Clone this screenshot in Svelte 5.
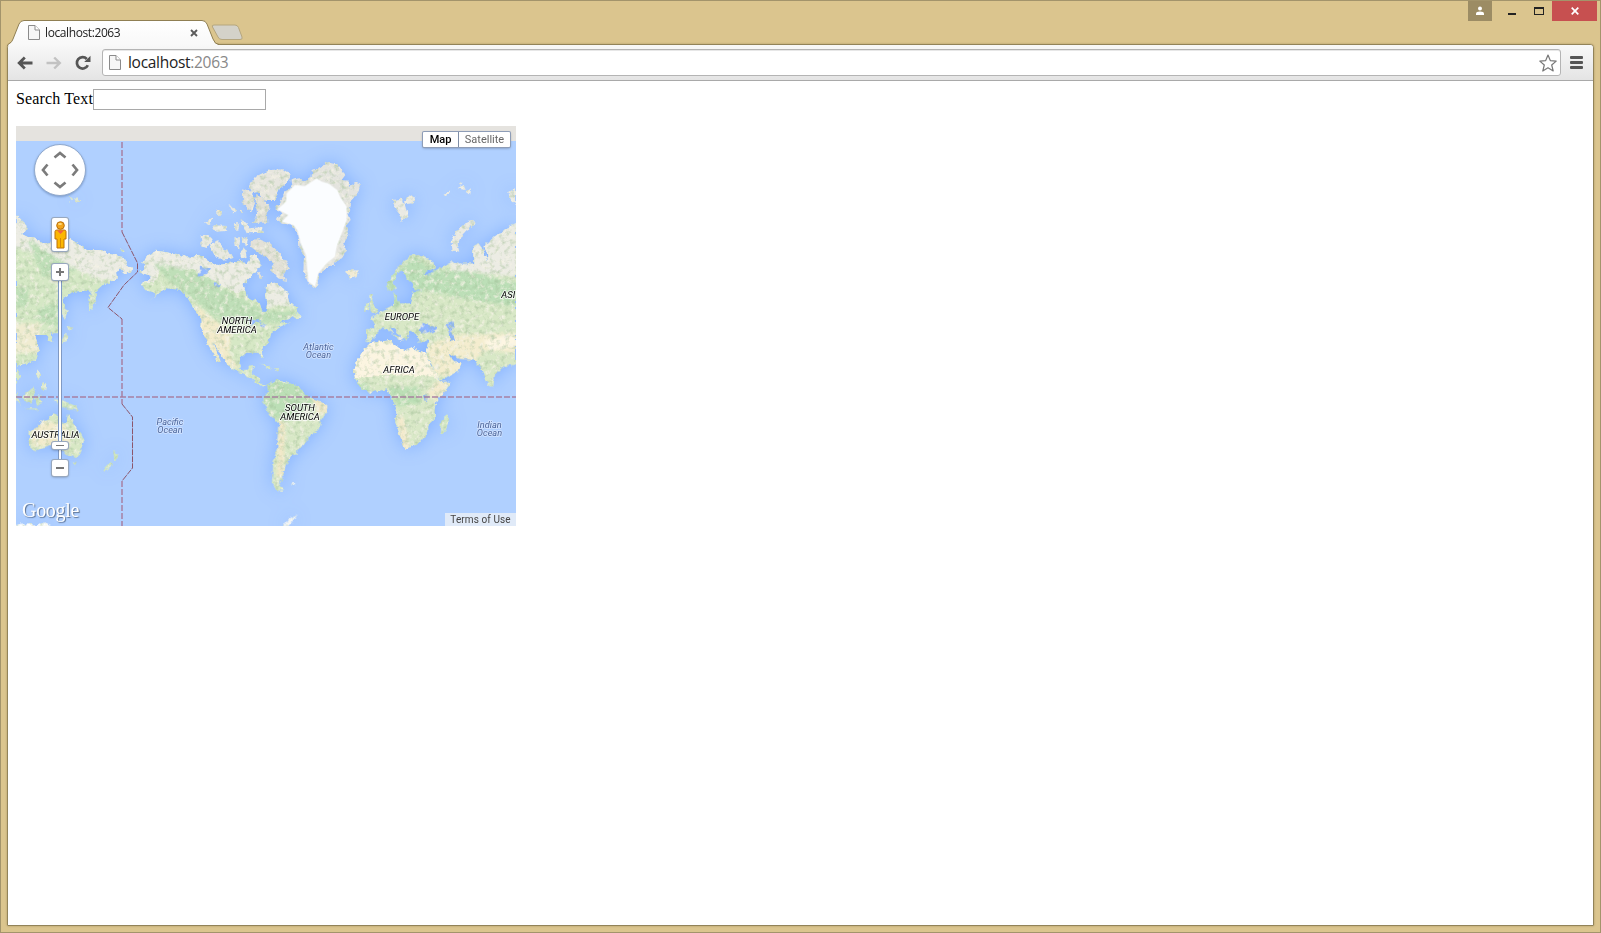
<script>
  let query = $state('');
  // Latin labels painted on the map canvas
  const labels = [
    { x: 237, y: 324, lines: ['NORTH', 'AMERICA'] },
    { x: 300, y: 411, lines: ['SOUTH', 'AMERICA'] },
    { x: 402, y: 320, lines: ['EUROPE'] },
    { x: 399, y: 373, lines: ['AFRICA'] },
    { x: 508.3, y: 298, lines: ['ASI'] },
    { x: 55.5, y: 437.5, lines: ['AUSTRALIA'] },
    { x: 170, y: 425, lines: ['Pacific', 'Ocean'], sea: true },
    { x: 318.5, y: 350, lines: ['Atlantic', 'Ocean'], sea: true },
    { x: 489.5, y: 428, lines: ['Indian', 'Ocean'], sea: true }
  ];
</script>

{#snippet page()}
  <svg class="doc" width="12" height="15" viewBox="0 0 12 15"><path d="M.5.5H7L11.500 5v9.500H.5z" fill="#f6f6f6" stroke="#8b8b8b" /><path d="M7 .5V5h4.500" fill="#fff" stroke="#8b8b8b" /></svg>
{/snippet}

<div class="window">
  <header class="titlebar">
    <div class="tabs">
      <svg class="tabshape" width="240" height="27" viewBox="0 0 240 27">
        <defs><linearGradient id="tabfill" x2="0" y2="1"><stop stop-color="#fff" /><stop offset="1" stop-color="#f8f8f8" /></linearGradient></defs>
        <path d="M1 27V25.500Q4 25 6 20L12 5Q13.500 1.500 17 1.500H195Q198.500 1.500 200 5L206 20Q208 25 211 25.500V27H0z" fill="url(#tabfill)" />
        <path d="M.5 27Q.5 25 3 24Q5 23 6 20L12 5Q13.500 1.500 17 1.500H195Q198.500 1.500 200 5L206 20Q208 25.500 212 25.500" fill="none" stroke="#8f7f53" />
        <path d="M207 6H228Q230.500 6 231.500 8.500L235 18Q236 20.500 233 20.500H215Q212 20.500 211 18L205.500 8Q204.500 6 207 6z" fill="#d4d2c9" stroke="#b5a67e" />
      </svg>
      <div class="tab">
        {@render page()}
        <span>localhost:2063</span>
        <svg class="close" width="8" height="8" viewBox="0 0 8 8"><path d="M1 1l6 6M7 1L1 7" stroke="#5b5b5b" stroke-width="1.900" /></svg>
      </div>
    </div>
    <div class="winbtns">
      <div class="user"><svg width="10" height="10" viewBox="0 0 10 10"><circle cx="5" cy="2.500" r="2" fill="#fff" /><path d="M1 9V7.500Q1 5.500 5 5.500T9 7.500V9z" fill="#fff" /></svg></div>
      <div class="min"></div>
      <div class="max"></div>
      <div class="exit"><svg width="8" height="8" viewBox="0 0 8 8"><path d="M.7.700l6.600 6.600M7.300.7L.7 7.300" stroke="#fff" stroke-width="1.700" /></svg></div>
    </div>
  </header>

  <div class="frame">
    <nav class="toolbar">
      <svg class="back" width="16" height="14" viewBox="0 0 16 14"><path d="M15.500 7H3M7.800 1.500L2.200 7l5.600 5.500" fill="none" stroke="#555" stroke-width="2.800" /></svg>
      <svg class="fwd" width="16" height="14" viewBox="0 0 16 14"><path d="M.5 7H13M8.200 1.500L13.800 7l-5.600 5.500" fill="none" stroke="#c2c2c2" stroke-width="2.400" /></svg>
      <svg class="reload" width="16" height="16" viewBox="0 0 16 16"><path d="M12.800 10.200A5.700 5.700 0 1 1 11.800 4" fill="none" stroke="#555" stroke-width="2.700" /><path d="M15.500.8V7H9.200z" fill="#555" /></svg>
      <div class="omnibox">
        {@render page()}
        <span class="url">localhost<i>:2063</i></span>
        <svg class="star" width="18" height="18" viewBox="0 0 18 18"><path d="M9 1l2.300 5.600 5.900.5-4.500 3.900 1.500 6L9 13.800 3.800 17l1.500-6L.8 7.100l5.900-.5z" fill="#fff" stroke="#777" stroke-width="1.200" stroke-linejoin="round" /></svg>
      </div>
      <div class="menu"><b></b><b></b><b></b></div>
    </nav>

    <main>
      <label class="search"><span>Search Text</span><input bind:value={query} /></label>
      <div class="map">
        <svg class="world" width="500" height="400" viewBox="16 126 500 400">
          <defs>
            <filter id="coast" filterUnits="userSpaceOnUse" x="-10" y="100" width="560" height="450" color-interpolation-filters="sRGB">
              <feTurbulence type="fractalNoise" baseFrequency=".22" numOctaves="3" seed="4" result="n" />
              <feDisplacementMap in="SourceGraphic" in2="n" scale="4.500" xChannelSelector="R" yChannelSelector="G" result="land" />
              <feGaussianBlur in="land" stdDeviation="9" result="b" />
              <feColorMatrix in="b" values="0 0 0 0 .51  0 0 0 0 .69  0 0 0 0 1  0 0 0 1 0" result="wide" />
              <feTurbulence type="fractalNoise" baseFrequency=".2" numOctaves="4" seed="9" result="t" />
              <feColorMatrix in="t" values="0 0 0 0 .96  0 0 0 0 .95  0 0 0 0 .9  2.600 0 0 0 -1.300" result="pale" />
              <feComposite in="pale" in2="land" operator="in" result="speck" />
              <feColorMatrix in="t" values="0 0 0 0 .62  0 0 0 0 .74  0 0 0 0 .58  0 1.400 0 0 -.680" result="dark" />
              <feComposite in="dark" in2="land" operator="in" result="shade" />
              <feMerge><feMergeNode in="wide" /><feMergeNode in="land" /><feMergeNode in="speck" /><feMergeNode in="shade" /></feMerge>
            </filter>
            <filter id="soft" x="-20%" y="-20%" width="140%" height="140%"><feGaussianBlur stdDeviation="5" /></filter>
            <clipPath id="na"><path id="nap" d="M-122 398L-105 380L-113 368L-95 345L-70 332L-40 337L-10 342L30 355L45 345L70 350L100 372L115 375L150 370L185 360L200 375L215 345L230 345L242 375L222 400L190 432L200 468L240 488L246 515L256 516L262 490L258 465L262 430L290 428L325 460L330 490L355 503L345 530L300 545L318 550L335 545L300 560L270 580L265 610L245 628L248 655L235 638L200 638L180 655L178 677L190 697L205 680L222 678L218 700L235 712L240 730L262 735L245 740L225 725L190 702L150 685L130 655L95 602L122 665L115 665L85 615L65 570L65 535L45 510L20 470L0 450L-40 445L-60 455L-95 485L-70 465L-105 450L-115 430L-85 410z" /></clipPath>
            <clipPath id="sa"><path id="sap" d="M262 285L290 270L325 280L355 290L378 318L410 330L440 345L442 365L425 390L415 420L388 435L382 455L352 480L350 492L330 500L318 525L308 545L310 555L298 585L310 602L288 600L276 575L280 520L292 470L295 400L270 375L250 340L252 322L265 305z" /></clipPath>
            <clipPath id="eu"><path id="eup" d="M138 505L145 485L185 430L220 400L248 408L280 425L288 445L268 450L245 462L262 465L310 438L340 425L365 432L400 430L400 380L415 370L430 390L445 430L440 395L430 380L470 345L500 325L528 310V735L500 735L485 745L465 765L460 798L450 800L435 780L425 745L400 720L355 715L325 700L335 720L365 730L355 755L305 782L292 770L258 700L258 690L265 662L235 665L230 645L210 635L200 660L185 655L165 625L150 620L160 640L180 652L175 660L150 630L125 625L110 640L90 665L78 660L78 627L106 627L105 610L92 595L130 570L160 555L165 540L160 515L170 535L180 550L210 550L220 515L250 510L225 507L210 485L200 475L188 455L175 455L160 485L170 505L150 512z" /></clipPath>
            <clipPath id="af"><path id="afp" d="M90 670L155 660L160 675L200 692L215 685L257 698L275 740L298 775L302 785L328 785L325 805L290 840L284 870L285 895L265 915L265 935L230 975L193 987L180 950L165 905L170 870L155 830L140 808L90 818L60 800L45 775L42 755L50 725L70 690z" /></clipPath>
            <clipPath id="as"><path id="asp" d="M18 -70L25 -70L50 -45L48 -28L35 -18L55 -8L80 -2L105 10L145 0L180 -3L205 12L230 30L270 30L300 42L335 50L350 72L366 84L362 98L340 100L328 85L318 98L325 112L300 126L275 138L262 150L255 158L262 162L252 195L238 215L235 180L245 155L225 152L190 155L158 178L165 205L145 250L145 280L125 280L130 310L115 305L110 285L75 285L88 330L80 358L45 375L20 380L30 410L18 430z" /></clipPath>
            <clipPath id="au"><path id="aup" d="M55 158L80 143L95 125L115 115L130 100L150 108L155 128L168 132L174 102L190 130L215 165L221 185L210 225L195 232L165 222L145 195L115 195L80 210L62 205z" /></clipPath>
          </defs>
          <rect x="16" y="126" width="500" height="400" fill="#b0d0ff" />
          <g filter="url(#coast)">
            <g transform="translate(180 140) scale(.33333)">
              <use href="#nap" fill="#d6e8c5" />
              <g clip-path="url(#na)">
                <path d="M-130 320H340V430L240 440L170 460L100 420L40 390L-60 390L-80 430H-130z" fill="#ecece4" />
                <path d="M-80 370L20 390L60 400L130 445L250 510L360 515L290 550L200 550L100 530L40 480L-30 425z" fill="#bfdfb8" filter="url(#soft)" />
                <path d="M40 490L100 540L155 570L145 640L180 690L100 655L60 570z" fill="#f3ebcb" filter="url(#soft)" />
                <path d="M260 425H340V495L260 500z" fill="#ecece4" filter="url(#soft)" />
                <path d="M60 380l30 5-10 20-25 5zM100 430l25 3-20 10zM205 540l30-4 10 14-18-6-10 18zM240 555l20-2-10 12z" fill="#94baff" />
              </g>
              <g fill="#e9e9e1">
                <path d="M62 285L85 285L98 298L80 325L65 320zM90 315L115 300L125 325L145 330L158 355L120 360L100 340zM72 248L98 230L90 255zM95 255L140 258L142 272L110 275zM145 190L168 215L160 220zM165 250L178 250L175 272L165 272zM160 295L180 295L178 325L165 320zM185 290L205 295L200 315L187 310zM180 340L195 325L200 350L185 355zM182 240L200 250L205 265L245 262L252 278L200 280z" />
                <path d="M212 300L235 298L270 312L300 340L330 385L310 400L318 425L295 415L270 390L285 370L250 345L225 330L212 320zM230 393l20 15-10 10zM190 145L215 155L225 190L215 215L188 190zM225 165L245 170L260 190L272 200L260 220L262 248L215 248L232 225z" fill="#e3e1d8" />
                <path d="M205 140L225 110L270 90L310 88L332 105L320 130L300 145L285 180L250 180L240 155L215 160z" fill="#e7e6df" />
                <path d="M495 395L505 390L535 392L530 408L510 417L505 404zM110 210h15v14h-12zM178 210h10v10z" fill="#f0ead4" />
                <path d="M342 535L352 515L365 533zM240 670L275 683L270 689zM282 685h18l-8 7z" fill="#d5e7c6" />
              </g>
              <path d="M286 208L308 175L312 155L335 145L332 120L355 112L370 125L395 110L398 90L425 80L440 66L475 75L496 105L485 120L505 122L508 140L530 125L543 130L535 155L515 185L505 220L512 240L500 255L508 285L490 310L498 330L485 355L455 375L420 400L408 445L385 430L370 395L372 350L358 320L355 280L335 255L300 250L288 235L310 220z" fill="#e4e4df" />
            </g>
            <g transform="translate(180 290) scale(.33333)">
              <use href="#sap" fill="#d8e8c6" />
              <g clip-path="url(#sa)">
                <path d="M250 270H370L400 330L350 390L290 390L250 340z" fill="#bcdfb6" filter="url(#soft)" />
                <path d="M395 320H450V370L410 370zM295 385L315 400L310 560L290 560z" fill="#f2e8c8" filter="url(#soft)" />
              </g>
              <path d="M310 708L325 688L355 670L340 690L325 708zM335 577h10v6h-10z" fill="#f4f6f5" />
            </g>
            <g transform="translate(340 120) scale(.33333)">
              <use href="#eup" fill="#d8e8c6" />
              <g clip-path="url(#eu)">
                <path d="M290 300H530V470L400 460L340 465z" fill="#ecece4" filter="url(#soft)" />
                <path d="M130 490L220 410L290 450L400 455L530 490V560L400 540L250 510L160 570z" fill="#bcdfb7" filter="url(#soft)" />
                <path d="M340 645L530 640V700L440 690L360 760L290 770L255 680z" fill="#f4edcf" filter="url(#soft)" />
                <path d="M430 660L530 640V680L450 695z" fill="#fdf6e3" filter="url(#soft)" />
                <path d="M235 635L245 608L265 615L288 620L290 632L270 638L245 640zM318 610L340 603L345 625L335 630L346 660L330 662L325 635z" fill="#8fb6ff" />
              </g>
              <use href="#afp" fill="#d9e8c7" />
              <g clip-path="url(#af)">
                <path d="M40 650H260L290 770L160 765L40 775z" fill="#fcf5e1" />
                <path d="M140 800H235L245 850L170 860zM40 780L90 800L80 825H40z" fill="#bcdfb6" filter="url(#soft)" />
                <path d="M290 785H335L290 845L260 820zM170 890L190 890L210 985L185 990z" fill="#f4ebce" filter="url(#soft)" />
                <path d="M250 830l14-5 2 14-12 4z" fill="#8fb6ff" />
              </g>
              <path d="M322 885L327 900L318 930L308 942L300 930L304 900zM88 525L98 520L97 545L115 575L105 582L92 575zM75 552L88 548L88 570L72 572z" fill="#d3e7c5" />
              <path d="M158 240L185 236L190 248L210 225L228 235L220 250L198 252L192 245L205 290L185 306L180 285L165 265zM170 650L187 653L182 662zM310 225l22-15-10 20zM350 205l22-10 5 15zM360 186l8 2-5 6zM376 215l14-10-3 18zM337 390L335 360L350 332L372 312L400 300L407 310L375 335L362 350L353 375L358 395zM505 215L528 205V255L510 240z" fill="#eaeae4" />
            </g>
            <g transform="translate(10 240) scale(.33333)">
              <use href="#asp" fill="#d5e8c5" />
              <g clip-path="url(#as)">
                <path d="M10 -80H100L400 30V120H270L130 60L10 20z" fill="#ecece4" filter="url(#soft)" />
                <path d="M10 145H55V200H10zM85 205L145 190V260L80 240zM50 -5L150 60L200 90L100 110z" fill="#bfdfb8" filter="url(#soft)" />
                <path d="M10 250H90V340H10z" fill="#f0ecd1" filter="url(#soft)" />
              </g>
              <path d="M155 195l18 15-8 30-9-15zM170 258l17 5-10 10zM173 280l-3 22-24 10 8-15zM83 390l8 10-3 16-8-10zM95 428l14 5-3 18-9-8zM330 28l15 3-8 5zM176 -133l16 8-10 10zM195 -126l16 7-10 6z" fill="#dce9d0" />
            </g>
            <g transform="translate(10 380) scale(.33333)">
              <use href="#aup" fill="#d8e8c5" />
              <g clip-path="url(#au)"><path d="M60 110L165 135L185 170L170 205L65 195z" fill="#f3ebcc" filter="url(#soft)" /></g>
              <path d="M35 50L70 22L75 35L65 70L45 65zM75 50L98 45L85 55L95 68L80 75zM130 58L160 62L190 75L208 90L180 88L155 80zM18 35L32 75L18 60zM188 245l12 2-5 9zM310 212L327 228L312 245L312 235zM305 245L308 253L285 275L279 270zM40 85l40 0 4 5z" fill="#cfe5c2" />
              <path d="M18 432L60 430L80 437L105 428L125 437L130 445H18z" fill="#fff" />
            </g>
          </g>
          <path transform="translate(180 140) scale(.33333)" d="M292 208L318 185L320 160L345 135L375 138L410 115L425 125L445 130L472 150L480 170L500 200L500 240L485 280L470 320L465 350L440 370L415 400L405 440L385 425L378 345L362 310L352 270L340 255L305 245L325 225z" fill="#fbfdff" />
          <rect x="16" y="126" width="500" height="15" fill="#e5e3df" />
          <g fill="none" stroke="#a67b9d">
            <path d="M16 397H516" stroke-width="2" stroke-dasharray="6 2" opacity=".7" />
            <path d="M122 142V232M122 319V404M122 481V526" stroke-width="2" stroke-dasharray="6 2" opacity=".7" />
            <path d="M122 232L137.500 263V272L124 285L108 307.500L122 319M122 404L132.500 417V468L122 481" stroke="#8c566b" stroke-dasharray="6 1" />
          </g>
          {#each labels as l}
            <text class:sea={l.sea} text-anchor="middle" y={l.y}>{#each l.lines as line, i}<tspan x={l.x} dy={i ? (l.sea ? 8 : 9) : 0}>{line}</tspan>{/each}</text>
          {/each}
        </svg>

        <div class="types"><b>Map</b><span>Satellite</span></div>
        <svg class="pan" width="58" height="58" viewBox="0 0 58 58"><circle cx="29" cy="28" r="25.500" fill="#fff" stroke="#91a9cc" /><path d="M23.500 15.500L29 11l5.500 4.500M23.500 40.500L29 45l5.500-4.500M16.500 22.500L12 28l4.500 5.500M41.500 22.500L46 28l-4.500 5.500" fill="none" stroke="#7b7b7b" stroke-width="2.700" /></svg>
        <div class="pegman"><svg width="13" height="28" viewBox="0 0 13 28"><path d="M1 10.500Q1 9 3 9H10Q12 9 12 10.500V18H10V27H3V18H1z" fill="#fbb703" stroke="#bd7308" /><path d="M3 9.500H10L6.500 13z" fill="#f16447" /><path d="M6.500 17V27" stroke="#d78a05" /><circle cx="6.500" cy="4.500" r="3.800" fill="#f3a51c" stroke="#b96e09" /><ellipse cx="6" cy="3" rx="2" ry="1" fill="#ffdc80" /></svg></div>
        <div class="rail"></div>
        <div class="zoom in"></div>
        <div class="thumb"></div>
        <div class="zoom out"></div>
        <div class="google">Google</div>
        <div class="terms">Terms of Use</div>
      </div>
    </main>
  </div>
</div>

<style>
  :global(body) { margin: 0; overflow: hidden; }
  .window { box-sizing: border-box; width: 1601px; height: 933px; background: #dbc58e; border: 1px solid #a3946b; display: flex; flex-direction: column; padding: 0 6px 6px; }
  svg { display: block; flex: none; }
  .titlebar { height: 43px; display: flex; justify-content: space-between; }
  .tabs { display: grid; padding-top: 18px; width: 240px; height: 27px; position: relative; z-index: 1; }
  .tabshape, .tab { grid-area: 1 / 1; }
  .tab { display: flex; align-items: center; height: 27px; padding-left: 21px; width: 170px; font: 12px "Open Sans", sans-serif; color: #222; }
  .tab span { margin-left: 5px; letter-spacing: -.4px; }
  .tab .close { margin-left: auto; }
  .winbtns { display: flex; height: 20px; margin-right: -3px; }
  .user { width: 24px; display: flex; align-items: center; justify-content: center; background: #9c8c64; }
  .min { width: 8px; height: 2px; background: #222; margin: 12px 0 0 16px; }
  .max { box-sizing: border-box; width: 10px; height: 8px; border: 1px solid #222; border-top-width: 2px; margin: 6px 8px 0 18px; }
  .exit { width: 45px; background: #c75050; display: flex; align-items: center; justify-content: center; }
  .frame { flex: 1; box-sizing: border-box; border: 1px solid #928359; border-radius: 4px 4px 1px 1px; background: #fff; overflow: hidden; box-shadow: 0 0 2px #a3905f; }
  .toolbar { box-sizing: border-box; height: 36px; display: flex; align-items: center; padding: 0 10px 0 9px; background: linear-gradient(#f8f8f8, #e4e4e4); border-bottom: 1px solid #a9a9a9; }
  .fwd { margin-left: 13px; }
  .reload { margin-left: 13px; }
  .omnibox { flex: 1; box-sizing: border-box; height: 27px; margin: 0 9px 0 11px; display: flex; align-items: center; padding: 0 3px 0 6px; border: 1px solid #b4b4b4; border-radius: 3px; background: #fff; box-shadow: inset 0 1px #e7e7e7; }
  .url { font: 15.500px/20px "Open Sans", sans-serif; letter-spacing: -.3px; margin: -1px 0 0 7px; color: #222; }
  .url i { font-style: normal; color: #888; }
  .star { margin-left: auto; }
  .menu { display: grid; gap: 2px; }
  .menu b { width: 13px; height: 3px; background: #555; border-radius: 1px; }
  main { padding: 8px; font: 16px "Liberation Serif", serif; color: #000; }
  .search { display: flex; align-items: center; height: 21px; }
  .search span { width: 77px; white-space: nowrap; letter-spacing: .14px; margin-top: -1px; }
  input { box-sizing: border-box; width: 173px; height: 21px; padding: 1px; border: 1px solid #a9a9a9; background: #fff; outline: 0; }
  .map { position: relative; width: 500px; height: 400px; margin-top: 16px; overflow: hidden; font-family: Roboto, sans-serif; }
  text { font: italic 400 9.500px Roboto, sans-serif; fill: #000; stroke: #ffffffb8; stroke-width: 2px; paint-order: stroke; stroke-linejoin: round; }
  text.sea { font-size: 9.200px; fill: #4b659c; stroke: #d5e5ff; stroke-width: 1.500px; }
  .types { position: absolute; right: 6px; top: 6px; height: 15px; display: flex; font-size: 11px; line-height: 15px; background: #fff; border-radius: 1px; box-shadow: 0 0 0 1px #8e9db7, 0 1px 3px #0006; color: #666; }
  .types b { width: 35px; text-align: center; font-weight: 500; color: #000; border-right: 1px solid #7e8da6; }
  .types span { width: 51px; text-align: center; }
  .pan { position: absolute; left: 15px; top: 16px; filter: drop-shadow(0 1px 1px #5577aa99); }
  .pegman, .zoom, .thumb { position: absolute; box-sizing: border-box; left: 36px; width: 16px; background: #fff; border-radius: 2px; box-shadow: 0 0 0 1px #98a8be, 0 1px 3px #0006; }
  .pegman { top: 92px; height: 33px; display: grid; place-items: center; }
  .zoom { height: 16px; background: linear-gradient(#777, #777) center / 8px 2px no-repeat, #fff; }
  .zoom.in { top: 138px; background: linear-gradient(#777, #777) center / 8px 2px no-repeat, linear-gradient(#777, #777) center / 2px 8px no-repeat, #fff; }
  .zoom.out { top: 334px; }
  .thumb { top: 316px; height: 7px; background: linear-gradient(#777, #777) center / 8px 1px no-repeat, #fff; }
  .rail { position: absolute; left: 43px; top: 150px; width: 2px; height: 186px; background: #fff; box-shadow: 0 0 0 1px #7f99c4; }
  .google { position: absolute; left: 6px; top: 372px; font: 20px/24px "Liberation Serif", serif; letter-spacing: -.3px; color: #fff; text-shadow: 1px 1px 1px #5b7192; }
  .terms { position: absolute; right: 0; bottom: 0; width: 71px; height: 13px; line-height: 14px; font-size: 10px; letter-spacing: .1px; text-align: center; color: #444; background: #f5f5f5b3; white-space: nowrap; }
</style>
